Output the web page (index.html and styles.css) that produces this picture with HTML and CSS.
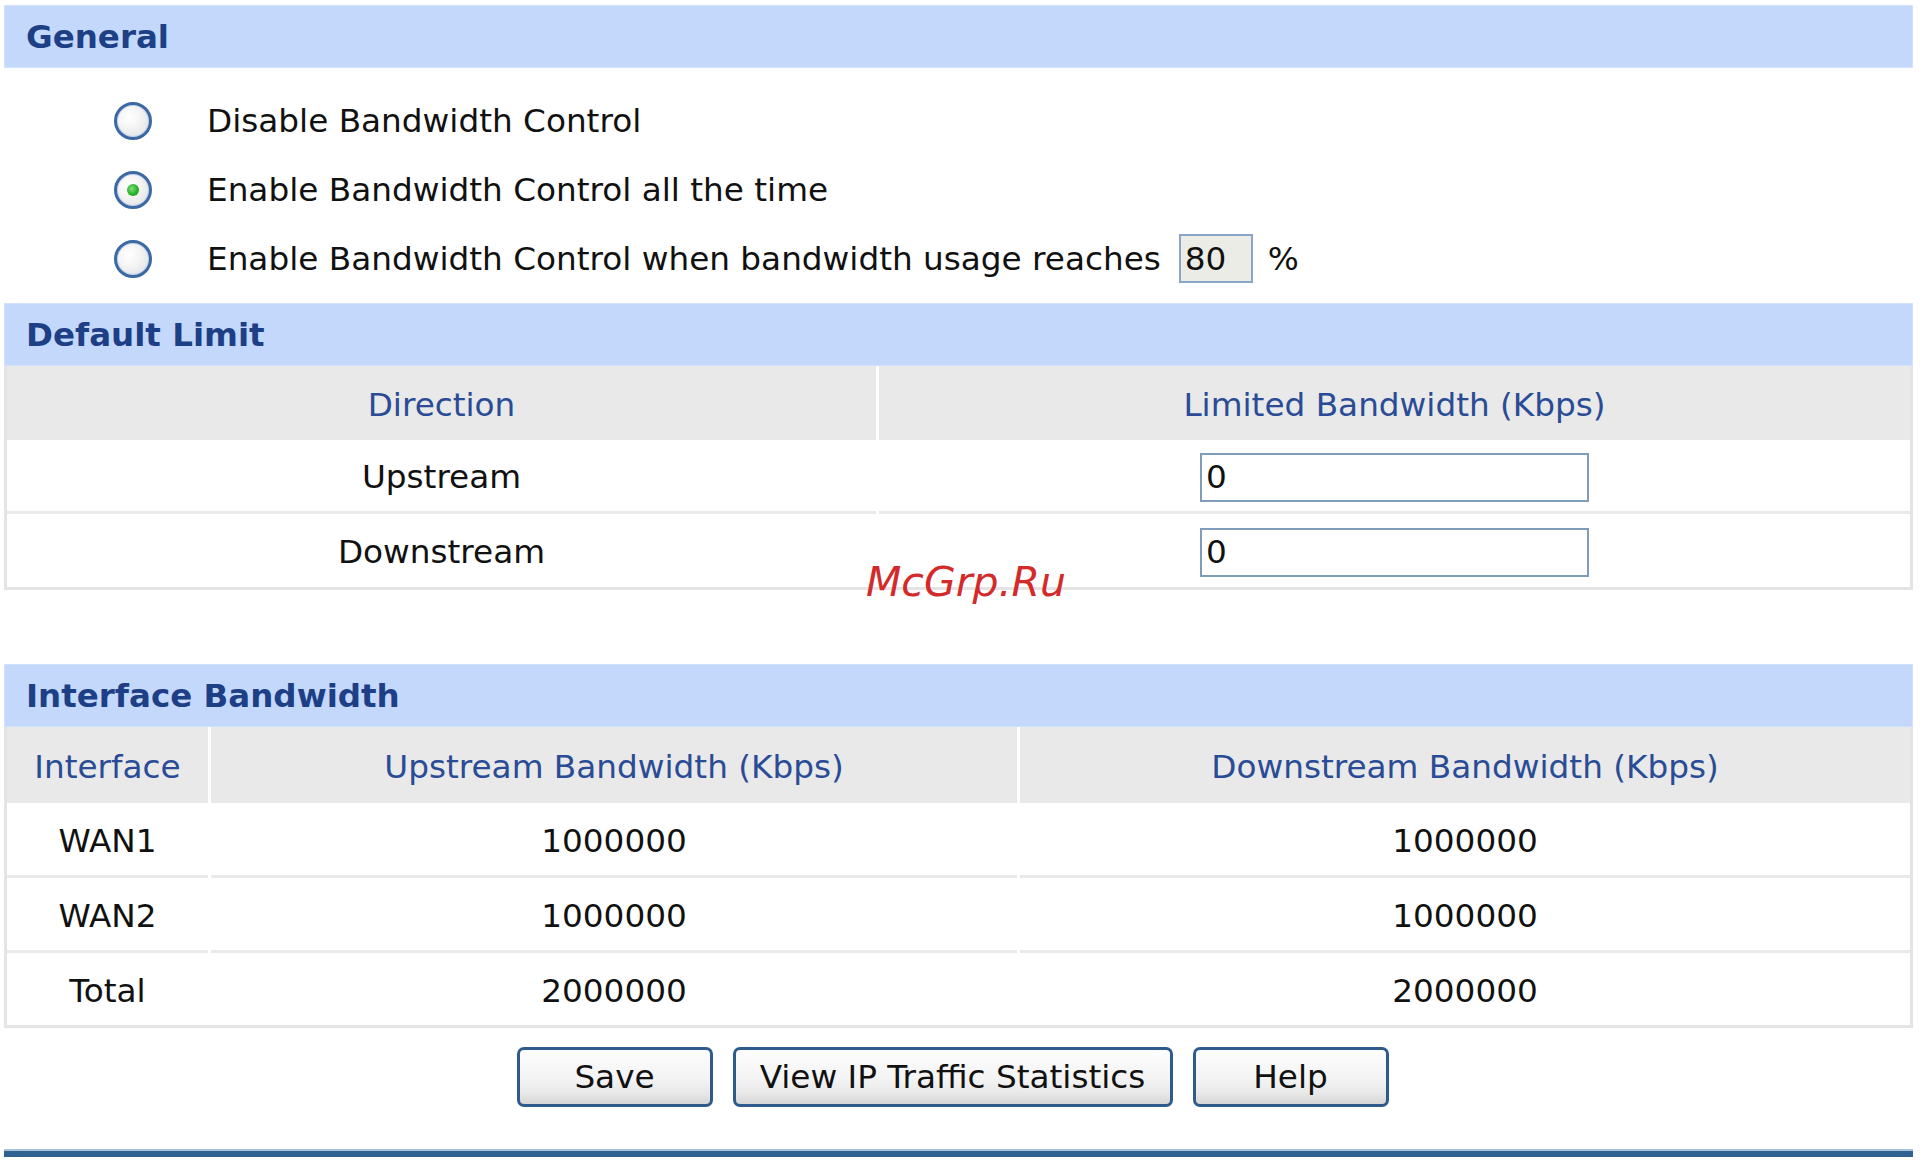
FILE: index.html
```html
<!DOCTYPE html>
<html>
<head>
<meta charset="utf-8">
<title>Bandwidth Control</title>
<link rel="stylesheet" href="styles.css">
</head>
<body>
<div class="page">
  <div class="bar">General</div>
  <div class="options">
    <div class="opt"><span class="radio"></span><span>Disable Bandwidth Control</span></div>
    <div class="opt"><span class="radio checked"></span><span>Enable Bandwidth Control all the time</span></div>
    <div class="opt"><span class="radio"></span><span>Enable Bandwidth Control when bandwidth usage reaches</span><input class="pct-box" type="text" value="80"><span class="pct">%</span></div>
  </div>

  <div class="bar">Default Limit</div>
  <div class="tbl tbl-limit">
    <div class="th">Direction</div>
    <div class="th">Limited Bandwidth (Kbps)</div>
    <div class="td">Upstream</div>
    <div class="td"><input class="field" type="text" value="0"></div>
    <div class="td last">Downstream</div>
    <div class="td last"><input class="field" type="text" value="0"></div>
  </div>

  <div class="bar bar-gap">Interface Bandwidth</div>
  <div class="tbl tbl-iface">
    <div class="th th-tall">Interface</div>
    <div class="th th-tall">Upstream Bandwidth (Kbps)</div>
    <div class="th th-tall">Downstream Bandwidth (Kbps)</div>
    <div class="td td-i">WAN1</div>
    <div class="td td-i">1000000</div>
    <div class="td td-i">1000000</div>
    <div class="td td-i">WAN2</div>
    <div class="td td-i">1000000</div>
    <div class="td td-i">1000000</div>
    <div class="td td-i last">Total</div>
    <div class="td td-i last">2000000</div>
    <div class="td td-i last">2000000</div>
  </div>

  <div class="buttons">
    <button class="btn btn-sm" type="button">Save</button>
    <button class="btn btn-lg" type="button">View IP Traffic Statistics</button>
    <button class="btn btn-sm" type="button">Help</button>
  </div>
  <div class="rule"></div>

  <div class="watermark">McGrp.Ru</div>
</div>
</body>
</html>
```

FILE: styles.css
```css
html, body {
  margin: 0;
  background: #ffffff;
}

body {
  font-family: "DejaVu Sans", Verdana, sans-serif;
  font-size: 32.7px;
  color: #111111;
}

.page {
  position: relative;
  width: 1909px;
  padding: 5px 0 0 4px;
}

.bar {
  height: 63px;
  box-sizing: border-box;
  background: #c4d8fc;
  border: 1px solid #d2e1fd;
  color: #1c3f86;
  font-weight: bold;
  display: flex;
  align-items: center;
  padding-left: 21px;
  font-size: 32.5px;
}

.bar-gap {
  margin-top: 74px;
}

.options {
  padding: 18px 0 10px 110px;
}

.opt {
  height: 69px;
  display: flex;
  align-items: center;
}

.radio {
  width: 38px;
  height: 38px;
  box-sizing: border-box;
  border-radius: 50%;
  border: 3px solid #3c69a3;
  box-shadow: 0 0 0 1px #c3d3e8 inset;
  background: radial-gradient(circle at 38% 38%, #ffffff 0%, #f6f6f6 35%, #dcdcdc 100%);
  margin-right: 55px;
  display: flex;
  align-items: center;
  justify-content: center;
  flex: none;
}

.radio.checked::after {
  content: "";
  width: 12px;
  height: 12px;
  border-radius: 50%;
  background: radial-gradient(circle at 40% 40%, #7ee07e 0%, #27b127 55%, #1a8f1a 100%);
}

.pct-box {
  width: 74px;
  height: 49px;
  box-sizing: border-box;
  border: 2px solid #8aa6c6;
  background: #ecece6;
  margin: 0 0 0 18px;
  padding: 0 0 0 4px;
  font: inherit;
  color: #111111;
  outline: none;
}

.pct {
  margin-left: 15px;
}

.tbl {
  display: grid;
  column-gap: 3px;
  border: 3px solid #e4e4e4;
  border-top: none;
}

.tbl-limit {
  grid-template-columns: 869px 1031px;
}

.tbl-iface {
  grid-template-columns: 201px 806px 890px;
}

.th {
  height: 74px;
  box-sizing: border-box;
  padding-top: 4px;
  background: #e9e9e9;
  color: #2a4c96;
  display: flex;
  align-items: center;
  justify-content: center;
}

.th-tall {
  height: 76px;
}

.td {
  height: 74px;
  box-sizing: border-box;
  padding-top: 3px;
  border-bottom: 3px solid #e9e9e9;
  display: flex;
  align-items: center;
  justify-content: center;
}

.td-i {
  height: 75px;
}

.td.last {
  border-bottom: none;
  height: 73px;
}

.td-i.last {
  height: 72px;
}

.field {
  width: 389px;
  height: 49px;
  box-sizing: border-box;
  border: 2px solid #7f9db9;
  background: #ffffff;
  margin: 0;
  padding: 0 0 0 4px;
  font: inherit;
  color: #111111;
  outline: none;
}

.buttons {
  display: flex;
  justify-content: center;
  gap: 20px;
  margin-top: 19px;
  padding-right: 12px;
}

.btn {
  height: 60px;
  box-sizing: border-box;
  border: 3px solid #2e5b8c;
  border-radius: 7px;
  background: linear-gradient(#fdfdfd 0%, #f3f3f3 55%, #e8e8e8 80%, #d6d6d6 100%);
  font: inherit;
  color: #111111;
  padding: 0;
  margin: 0;
}

.btn-sm {
  width: 196px;
}

.btn-lg {
  width: 440px;
}

.rule {
  margin-top: 42px;
  height: 6px;
  background: #2f6291;
  border-top: 2px solid #a9c1d9;
}

.watermark {
  position: absolute;
  left: 866px;
  top: 562px;
  font-size: 41px;
  line-height: 41px;
  font-style: oblique;
  color: #d42a2a;
}
```
